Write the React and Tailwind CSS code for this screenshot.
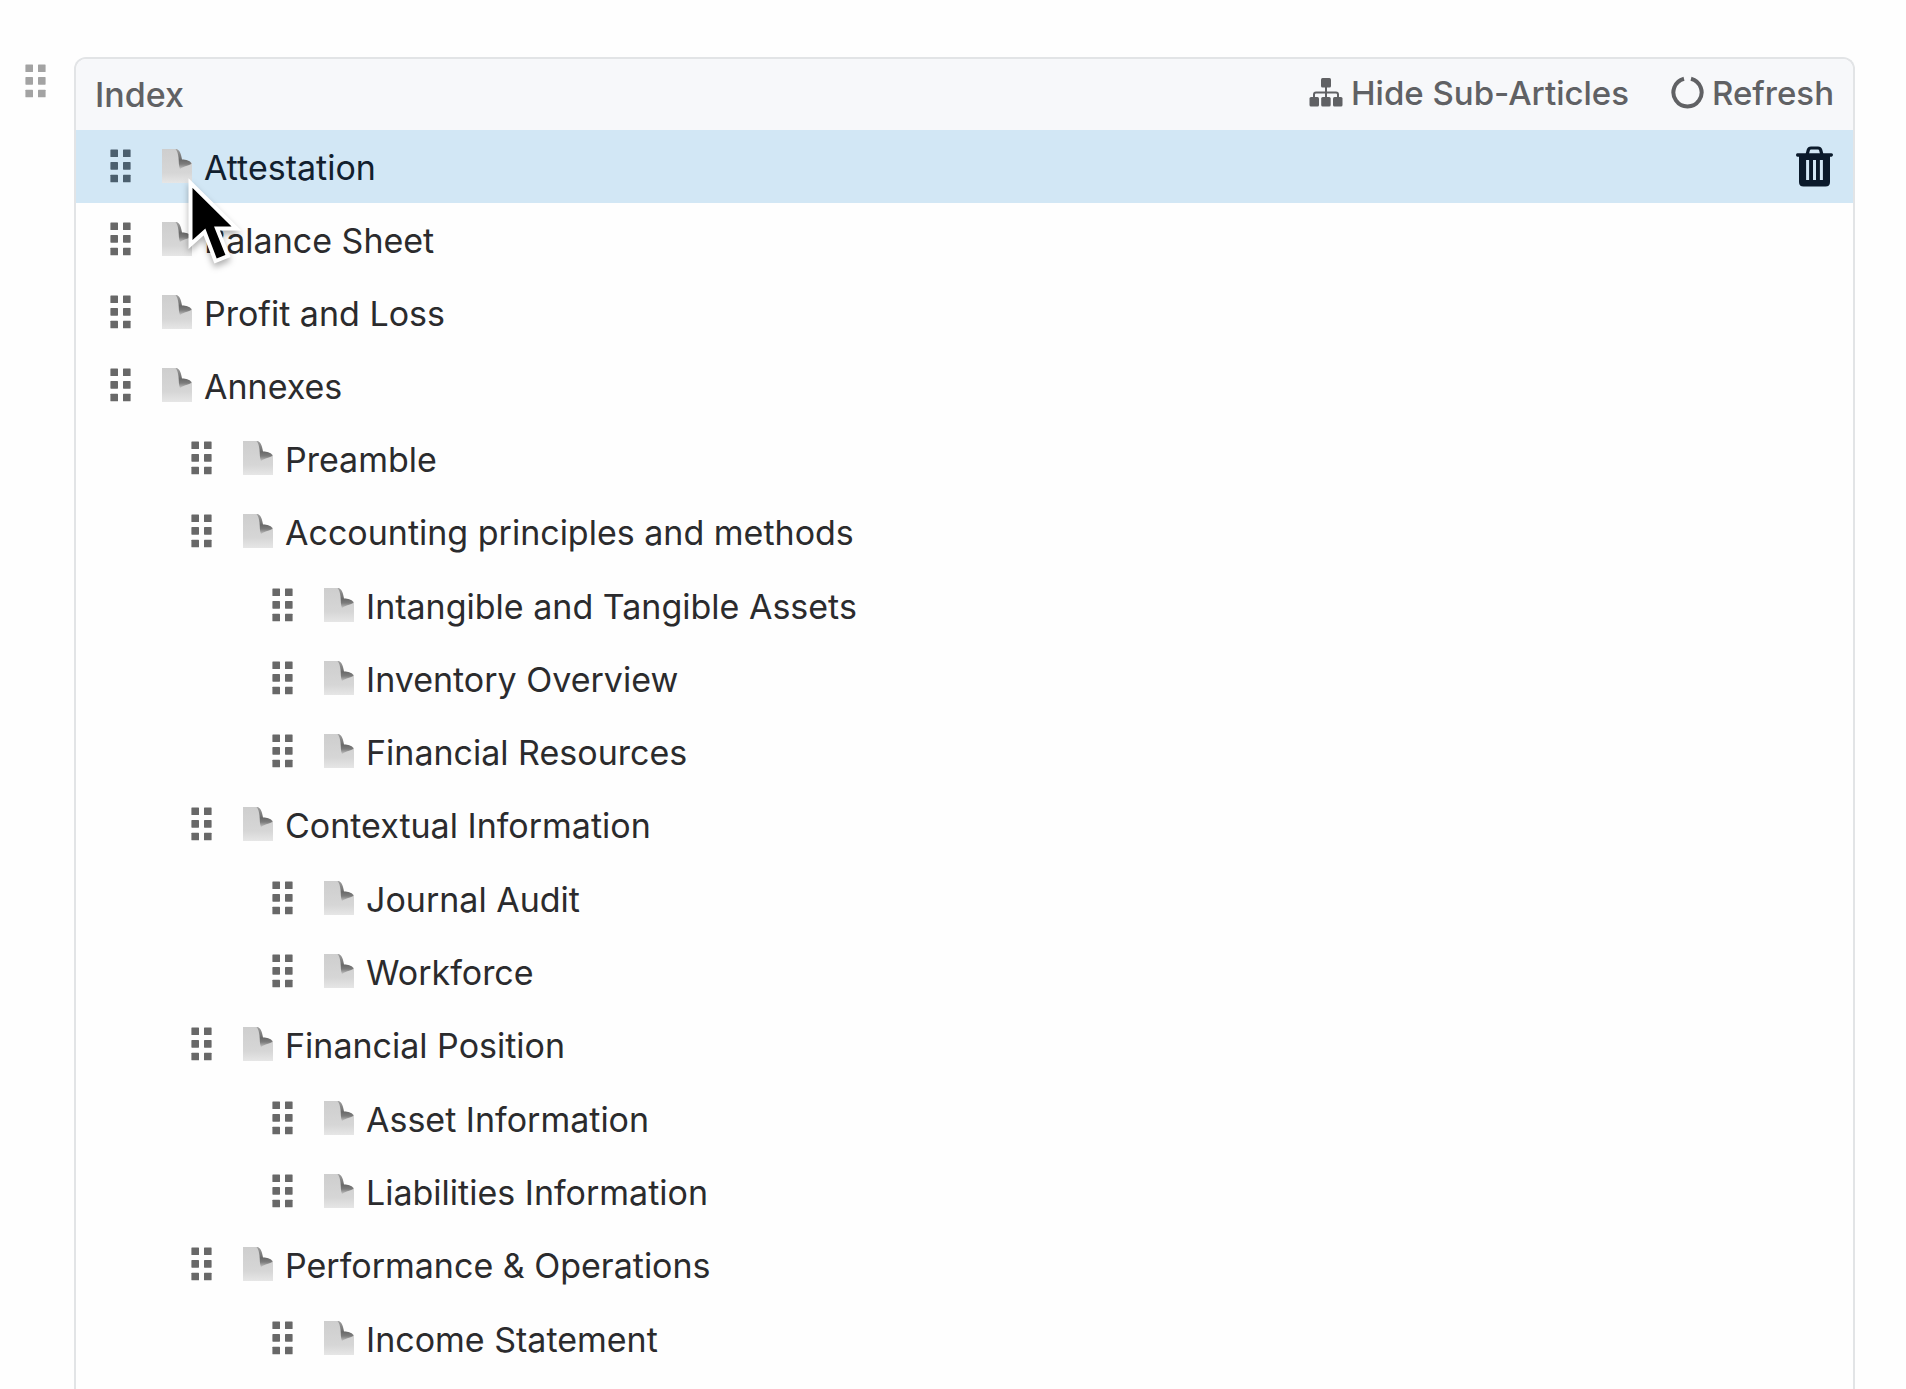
import clsx from 'clsx';

const articles = [
  { title: 'Attestation', active: true },
  { title: 'Balance Sheet' },
  { title: 'Profit and Loss' },
  {
    title: 'Annexes',
    children: [
      { title: 'Preamble' },
      {
        title: 'Accounting principles and methods',
        children: [
          { title: 'Intangible and Tangible Assets' },
          { title: 'Inventory Overview' },
          { title: 'Financial Resources' },
        ],
      },
      {
        title: 'Contextual Information',
        children: [{ title: 'Journal Audit' }, { title: 'Workforce' }],
      },
      {
        title: 'Financial Position',
        children: [{ title: 'Asset Information' }, { title: 'Liabilities Information' }],
      },
      {
        title: 'Performance & Operations',
        children: [{ title: 'Income Statement' }],
      },
    ],
  },
];

// Left padding of a row, by depth in the tree
const indents = ['pl-[34px]', 'pl-[115px]', 'pl-[196px]'];

function GripIcon() {
  return (
    <svg width="21" height="34" viewBox="0 0 21 34" fill="currentColor" aria-hidden="true">
      {[0.4, 13].map((x) =>
        [0.5, 13.1, 25.7].map((y) => <rect key={`${x}-${y}`} x={x} y={y} width="7.6" height="7.6" rx="0.6" />)
      )}
    </svg>
  );
}

function PageIcon() {
  return (
    <svg width="30" height="34" viewBox="0 0 30 34" aria-hidden="true">
      <defs>
        <linearGradient id="page-fill" x1="0" y1="0" x2="0" y2="1">
          <stop offset="0" stopColor="#cecece" />
          <stop offset="0.7" stopColor="#d6d6d6" />
          <stop offset="1" stopColor="#e6e6e6" />
        </linearGradient>
        <linearGradient id="page-fold" x1="0" y1="0" x2="0" y2="1">
          <stop offset="0" stopColor="#a0a0a0" />
          <stop offset="0.55" stopColor="#6a6a6a" />
          <stop offset="0.75" stopColor="#7c7c7c" />
          <stop offset="1" stopColor="#c4c4c4" />
        </linearGradient>
      </defs>
      <path d="M0 0H15C18 2 18.5 6 19.5 10.500C23 10.500 27 11 30 14V34H0Z" fill="url(#page-fill)" />
      <path d="M13.500 0C17.500 0.500 19 4 20 10.500C24 10.500 28 11.500 29.500 14.500C28 16.500 23 16.500 18 20C16.500 17 17 13 16.500 8.500C16 5 15.500 2 13.500 0Z" fill="url(#page-fold)" />
    </svg>
  );
}

function SitemapIcon() {
  return (
    <svg width="34" height="29" viewBox="0 0 34 29" fill="currentColor" aria-hidden="true">
      <rect x="12" y="0" width="10" height="9.500" rx="1.500" />
      <path d="M17 9V20M5 20V16.500Q5 14.500 7 14.500H27Q29 14.500 29 16.500V20" fill="none" stroke="currentColor" strokeWidth="2" />
      <rect x="0.500" y="19" width="9.500" height="9.500" rx="1.500" />
      <rect x="12.200" y="19" width="9.500" height="9.500" rx="1.500" />
      <rect x="24" y="19" width="9.500" height="9.500" rx="1.500" />
    </svg>
  );
}

function NotchIcon() {
  return (
    <svg width="33" height="33" viewBox="0 0 33 33" fill="none" stroke="currentColor" strokeWidth="4" aria-hidden="true">
      <path d="M13 2.700A14.100 14.100 0 1 0 20 2.700" />
    </svg>
  );
}

function TrashIcon() {
  return (
    <svg width="37" height="41" viewBox="0 0 37 41" aria-hidden="true">
      <path d="M11 9L12.300 4Q12.900 2 15 2H22Q24.100 2 24.700 4L26 9" fill="none" stroke="currentColor" strokeWidth="3.200" />
      <path d="M1.500 7.300H35.500Q37 7.300 37 8.800T35.500 10.800H34V36Q34 40.500 29.500 40.500H7.500Q3 40.500 3 36V10.800H1.500Q0 10.800 0 9T1.500 7.300Z" fill="currentColor" />
      <path d="M11.600 14V34M18.500 14V34M25.400 14V34" stroke="#d2e7f5" strokeWidth="3" />
    </svg>
  );
}

function Pointer() {
  return (
    <svg
      className="pointer-events-none absolute top-12 left-[106px] z-10 drop-shadow-[0_4px_3px_rgba(0,0,0,0.3)]"
      width="60"
      height="92"
      viewBox="0 0 60 92"
      aria-hidden="true"
    >
      <path
        d="M8.500 5V66.500L22.500 54L33.500 83L46 78L35 50.500H54.500Z"
        fill="#000"
        stroke="#fff"
        strokeWidth="4"
        strokeLinejoin="miter"
      />
    </svg>
  );
}

function ArticleRow({ article, depth }) {
  return (
    <div
      className={clsx(
        'relative flex h-[73px] items-center pr-5',
        indents[depth],
        article.active ? 'bg-[#d2e7f5] text-[#12202e]' : 'text-[#2b2b2d]'
      )}
    >
      <div className="flex items-center gap-[31px] pb-0.5">
        <button
          type="button"
          aria-label={`Move ${article.title}`}
          className={clsx('cursor-grab', article.active ? 'text-[#4b5f6e]' : 'text-[#686868]')}
        >
          <GripIcon />
        </button>
        <PageIcon />
      </div>
      <a href="#" className="ml-3 pt-0.5 text-[34px] leading-10 font-[425]">
        {article.title}
      </a>
      {article.active && (
        <>
          <button type="button" aria-label={`Delete ${article.title}`} className="ml-auto text-[#0b1a2b]">
            <TrashIcon />
          </button>
          <Pointer />
        </>
      )}
    </div>
  );
}

function ArticleList({ items, depth = 0 }) {
  return (
    <ul className={clsx(depth > 1 && 'mt-px')}>
      {items.map((article) => (
        <li key={article.title}>
          <ArticleRow article={article} depth={depth} />
          {article.children && <ArticleList items={article.children} depth={depth + 1} />}
        </li>
      ))}
    </ul>
  );
}

export default function App() {
  return (
    <main className="flex min-h-screen items-stretch bg-[#fefefe] pt-[57px] pr-[51px] pl-[25px] font-[Inter,sans-serif]">
      <button type="button" aria-label="Move block" className="mt-[7px] mr-[28px] cursor-grab self-start text-[#a3a3a3]">
        <GripIcon />
      </button>
      <section className="flex-1 rounded-t-xl border-2 border-b-0 border-[#e2e4e6]">
        <header className="flex h-[71px] items-center justify-between rounded-t-[10px] bg-[#f7f8fa] px-[19px] leading-10 font-medium text-[#606164]">
          <h1 className="text-[34px]">Index</h1>
          <div className="flex items-center gap-[42px] pb-1 text-[33px]">
            <button type="button" className="flex items-center gap-2">
              <SitemapIcon />
              Hide Sub-Articles
            </button>
            <button type="button" className="flex items-center gap-2">
              <NotchIcon />
              Refresh
            </button>
          </div>
        </header>
        <ArticleList items={articles} />
      </section>
    </main>
  );
}
